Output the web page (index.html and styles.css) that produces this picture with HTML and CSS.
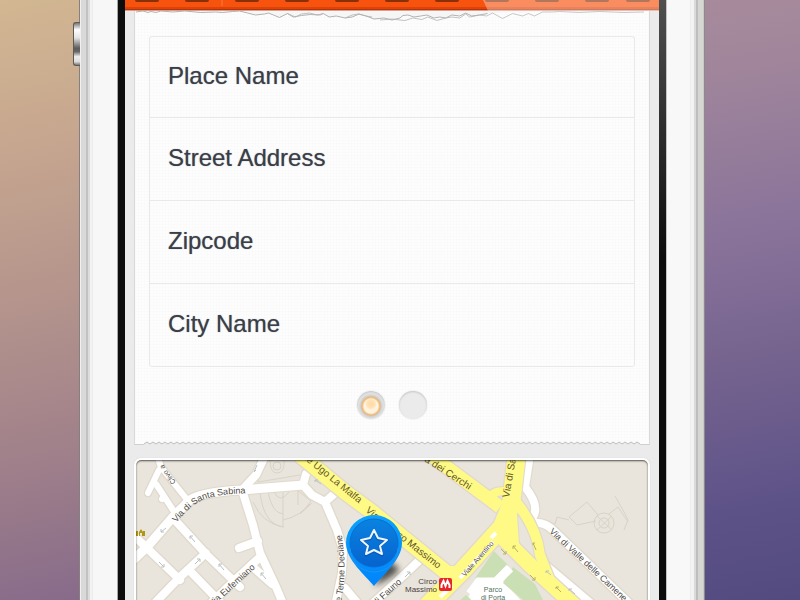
FILE: index.html
```html
<!DOCTYPE html>
<html lang="en">
<head>
<meta charset="utf-8">
<meta name="viewport" content="width=device-width, initial-scale=1">
<title>Place details</title>
<link rel="stylesheet" href="styles.css">
</head>
<body>
<div class="phone">
  <div class="volume-key"></div>
  <div class="bezel bezel-left"></div>
  <main class="screen">
    <header class="toolbar">
      <svg viewBox="0 0 534 11" preserveAspectRatio="none" aria-hidden="true">
        <rect width="534" height="11" fill="#f7530f"/>
        <rect y="7" width="534" height="2" fill="#dc4409"/>
        <rect y="9" width="534" height="1" fill="#b93208"/>
        <rect y="10" width="534" height="1" fill="#d9a08c"/>
        <path d="M97 0V6" stroke="#ff7a33"/>
        <path d="M12 0h20M62 0h20M112 0h20M162 0h20M212 0h20M262 0h20M312 0h20M362 0h20M412 0h20M462 0h20M503 0h20" stroke="#8a3009" stroke-width="4" stroke-linecap="round"/>
        <path d="M358 0H534V11H363Z" fill="#fff" opacity=".34"/>
      </svg>
    </header>
    <form class="card">
      <svg class="torn" viewBox="134 11 516 11" preserveAspectRatio="none" aria-hidden="true">
        <path d="M135 12L142 11L147 12.500L150 11.500L155 12.500L160 11L172 12L184 11L200 12.500L215 12L222 12.500L232 11.500L239 11L247 13L255 15L264 14L268 13L273 15L279 17.500L287 13.500L293 17L301 15.500L310 14.500L320 15L323 13.500L329 17L336 16L345 18L352 17L359 14L366 16L374 19L384 18L392 20L400 18L403 15.500L408 15L414 17L421 16L427 15L434 18L440 17L446 18L452 15L460 16L466 13L472 16L480 15L490 13L500 13L513 12L523 13L529 12L535 12L543 11.500L560 11L580 12L600 11.500L640 12V11H135Z" fill="#f6f6f6"/>
        <g fill="none" stroke="#b2b2b2" stroke-linejoin="round">
          <path d="M135 12L142 11L147 12.500L150 11.500L155 12.500L160 11L172 12L184 11L200 12.500L215 12L222 12.500L232 11.500L239 11L247 13L255 15L264 14L268 13L273 15L279 17.500L287 13.500L293 17L301 15.500L310 14.500L320 15L323 13.500L329 17L336 16L345 18L352 17L359 14L366 16L374 19L384 18L392 20L400 18L403 15.500L408 15L414 17L421 16L427 15L434 18L440 17L446 18L452 15L460 16L466 13L472 16L480 15L488 13.500"/>
          <path d="M287 13.500L295 17L301 14L309 13L317 15L323 13.500M345 18L352 15L358 14L366 16L372 17M380 20L392 19L400 20L405 20.500L413 18L422 19.500L428 17L437 20.500L446 18L452 17L460 18L466 14L470 17L480 15" opacity=".8"/>
          <path d="M480 15L487 16L493 13L503 18.500L513 13.500L523 16L529 13.500L535 16L543 12L553 12L560 11.500L580 12.500L600 11.500L625 12.500L645 12" opacity=".7"/>
        </g>
      </svg>
      <div class="fields">
        <label class="field"><span>Place Name</span><input type="text" name="place"></label>
        <label class="field"><span>Street Address</span><input type="text" name="street"></label>
        <label class="field"><span>Zipcode</span><input type="text" name="zip"></label>
        <label class="field"><span>City Name</span><input type="text" name="city"></label>
      </div>
      <nav class="pager" aria-label="Pages">
        <button type="button" class="dot dot-on" aria-label="Page 1"></button>
        <button type="button" class="dot" aria-label="Page 2"></button>
      </nav>
      <svg class="teeth" viewBox="0 0 516 5" preserveAspectRatio="none" aria-hidden="true">
        <defs>
          <pattern id="tooth" width="6" height="5" patternUnits="userSpaceOnUse">
            <rect width="6" height="5" fill="#ebebeb"/>
            <path d="M0 0H6V2L3 4L0 2Z" fill="#fbfbfb"/>
            <path d="M0 2L3 4L6 2" fill="none" stroke="#bdbdbd"/>
          </pattern>
        </defs>
        <rect width="516" height="5" fill="url(#tooth)"/>
        <path d="M0 0H9V4H0ZM507 0H516V4H507Z" fill="#fcfcfc"/>
        <path d="M0 4.500H9M507 4.500H516" stroke="#cfcfcf"/>
      </svg>
    </form>
    <section class="map" aria-label="Map">
      <svg viewBox="136 460 512 140" preserveAspectRatio="xMidYMin slice">
        <defs>
          <linearGradient id="pinOuter" x1="0" y1="0" x2="0" y2="1">
            <stop offset="0" stop-color="#0aa2fb"/><stop offset="1" stop-color="#0084fb"/>
          </linearGradient>
          <linearGradient id="pinInner" x1="0" y1="0" x2="0" y2="1">
            <stop offset="0" stop-color="#0a83e0"/><stop offset="1" stop-color="#0663cf"/>
          </linearGradient>
          <filter id="soft" x="-50%" y="-50%" width="200%" height="200%"><feGaussianBlur stdDeviation="3"/></filter>
          <filter id="edge" x="-10%" y="-10%" width="120%" height="120%">
            <feMorphology in="SourceAlpha" operator="dilate" radius="1" result="grown"/>
            <feFlood flood-color="#e0d9cc"/>
            <feComposite in2="grown" operator="in" result="line"/>
            <feMerge><feMergeNode in="line"/><feMergeNode in="SourceGraphic"/></feMerge>
          </filter>
          <path id="sabina" d="M176 523C189 508 197 500 213 497C222 494 230 494 252 493"/>
          <path id="deciane" d="M340 606Q349 570 340 526"/>
          <path id="clivo" d="M176 482L165 468L160 448"/>
        </defs>
        <rect x="0" y="400" width="800" height="600" fill="#e9e5dc"/>
        <g fill="none" stroke="#d8d3c8">
          <path d="M260 493Q264 525 284 527M268 492Q272 513 283 514M274 492Q280 504 289 492M253 502Q262 523 283 527V492M297 490L311 501Q302 516 283 520M260 460L258 482L300 475M270 460Q270 473 277 473Q285 473 284 460M298 490V505M300 514L310 504M256 478L260 470"/>
          <circle cx="277" cy="466" r="4"/>
          <circle cx="604" cy="523" r="10"/><circle cx="604" cy="523" r="5"/>
          <path d="M597 516L612 530M612 516L597 530M598 515L587 502L569 517L577 525L596 521M569 520L557 517L555 524L545 522M609 514L618 507L628 522M615 496L624 512L628 520L624 530M540 545L551 565L560 580M300 514L312 503"/>
        </g>
        <path fill="#fff" d="M478 578H500L526 606H464Z"/>
        <path fill="#cbdfb5" d="M494 551L509 566L497 578H475ZM513 567L535 584L546 606H530L503 583ZM458 602L466 595L478 606Z"/>
        <path d="M470 594L479 582L496 582L510 568" fill="none" stroke="#fff" stroke-width="9"/>
        <g fill="none" stroke="#fff" stroke-linecap="round" stroke-linejoin="round" filter="url(#edge)">
          <path stroke-width="9" d="M130 563L147 547L173 517L190 500Q202 492 242 490L303 485"/>
          <path stroke-width="6" d="M158 458L161 467L189 502M159 470L148 493M156 484L173 510M162 499L163 497"/>
          <path stroke-width="8" d="M173 518L206 554L240 587M130 532L147 548L180 580M152 606L180 577L206 553M190 571L224 606"/>
          <path stroke-width="8" d="M208 606L235 580L260 557M264 458L256 475L242 490L253 525L260 553L276 587L284 606M258 541L239 548M254 568L272 584"/>
          <path stroke-width="8" d="M306 474L303 485L312 495L325 502L334 494M325 502L337 530L343 550L342 573L335 606M345 588L360 606"/>
          <path stroke-width="8" d="M425 555L405 574L370 606"/>
          <path stroke-width="8" d="M530 455L525 487Q541 507 532 518M533 523Q545 521 555 532L632 606M543 563L594 606"/>
        </g>
        <g fill="none" stroke="#fffa85" stroke-linejoin="round" filter="url(#edge)">
          <path stroke-width="15" d="M300 455L345 492L372 512L400 535L447 573"/>
          <path stroke-width="13" d="M425 451L500 507"/>
          <path stroke-width="18" d="M517 452L511 505L502 527L463 570L427 606"/>
          <path stroke-width="15" d="M500 535L530 565L575 606"/>
          <path stroke-width="10" d="M512 515L514 545L530 567M516 502Q537 528 540 555L553 588"/>
          <path stroke-width="8" d="M488 500Q492 491 504 491M440 570L456 570"/>
        </g>
        <path d="M491 538L496 533M460 578L493 542M440 597L452 586" stroke="#fff" stroke-width="4"/>
        <g stroke="#b9c0c2" fill="none">
          <path d="M161 532l5-4m-5 1v3h3M190 536l5 6m-5-3v-3h3M219 564l5 6m-5-3v-3h3M159 562l5 5m0-3v3h-3M195 564l5-5m-3 0h3v3M261 573l5 6m-5-3v-3h3M254 472l3-7m-3 7l2-2M405 577l5-5m-3 0h3v3M315 480l6 4m-6-2v-2h3M546 571l5 4m-5-2v-2h3M569 589l6 5m-6-3v-2h3"/>
          <path stroke="#b8b05c" d="M501 549l5 5m0-3v3h-3M513 546l5 6m-5-3v-3h3M533 543l3 7m-3-5v-2h2M530 575l5 5m0-3v3h-3M556 587l5 5m-5-3v-2h3"/>
        </g>
        <g class="street">
          <text><textPath href="#sabina">Via di Santa Sabina</textPath></text>
          <text><textPath href="#deciane">lle Terme Deciane</textPath></text>
          <text class="tiny"><textPath href="#clivo">Clivo a</textPath></text>
          <text transform="translate(212 607) rotate(-42)">Via Eufemiano</text>
          <text transform="translate(376 606) rotate(-42)">di Fauno</text>
          <text transform="translate(549 532) rotate(43)">Via di Valle delle Camene</text>
          <text class="tiny" transform="translate(465 577) rotate(-49)">Viale Aventino</text>
          <text class="wide" transform="translate(300 456) rotate(39)">ale Ugo La Malfa</text>
          <text class="wide" transform="translate(365 511) rotate(42)">Via</text>
          <text class="wide end" transform="translate(438 569) rotate(38)">Circo Massimo</text>
          <text class="wide" transform="translate(424 461) rotate(33)">a dei Cerchi</text>
          <text class="wide" transform="translate(509 498) rotate(-80)">Via di Sa</text>
        </g>
        <g class="place">
          <text class="end" x="437" y="584">Circo</text>
          <text class="end" x="437" y="592">Massimo</text>
          <text class="park" x="493" y="592">Parco</text>
          <text class="park" x="493" y="600">di Porta</text>
        </g>
        <rect x="439" y="578" width="13" height="13" rx="2" fill="#e8262a"/>
        <path d="M441.500 588V585L443.500 581L445.500 586L447.500 581L449.500 585V588" fill="none" stroke="#fff" stroke-width="2"/>
        <path d="M136 531h2v5h-2zM139 536v-4l2-3 2 3v4h-1v-3h-2v3zM143 531h2v5h-2z" fill="#b3960f"/>
        <path d="M374 586L384 563Q392 560 399 569Q396 576 374 586Z" fill="#000" opacity=".65" filter="url(#soft)"/>
        <path d="M374 586C366 576 346 560 346 543A28 28 0 1 1 402 543C402 560 382 576 374 586Z" fill="url(#pinOuter)"/>
        <circle cx="374" cy="543" r="24" fill="url(#pinInner)" stroke="#0a6cd0"/>
        <path d="M350 548A24 24 0 0 0 398 548" fill="none" stroke="#1f93f0"/>
        <path d="M374 531L378 539L387 540L380 546L382 555L374 551L366 555L368 546L361 540L370 539Z" fill="none" stroke="#094fa8" stroke-width="3" stroke-linejoin="round" opacity=".6"/>
        <path d="M374 530L378 538L387 540L380 546L382 554L374 550L366 554L368 546L361 540L370 538Z" fill="none" stroke="#eef6ff" stroke-width="2" stroke-linejoin="round"/>
      </svg>
    </section>
  </main>
  <div class="bezel bezel-right"></div>
</div>
</body>
</html>
```
FILE: styles.css
```css
* {
  box-sizing: border-box;
}

body {
  margin: 0;
  min-height: 100vh;
  font-family: "Liberation Sans", Arial, sans-serif;
  color: #3a3e48;
  background:
    linear-gradient(168deg, #d2b792 0%, #c6a68f 22%, #b4948c 45%, #a0808a 68%, #85698a 92%, #7c6385 100%) left / 50% 100% no-repeat,
    linear-gradient(170deg, #ab8e9c 0%, #a1869b 18%, #88729a 45%, #76648f 62%, #5d5288 85%, #534b80 100%) right / 50% 100% no-repeat;
}

.phone {
  position: relative;
  display: flex;
  min-height: 100vh;
  margin: 0 95px 0 79px;
}

.volume-key {
  position: absolute;
  top: 22px;
  left: -6px;
  width: 7px;
  height: 44px;
  border: 1px solid #5f5a56;
  border-right: 0;
  border-radius: 3px 0 0 3px;
  background: linear-gradient(#777 0%, #fff 16%, #e4e4e4 35%, #5c5c5c 60%, #666 68%, #eee 80%, #ddd 92%, #777 100%);
}

.bezel-left {
  flex: 0 0 46px;
  background: linear-gradient(90deg,
    #85807d 0 1px, #efefef 1px 2px, #d9d9d9 2px 7px, #c2c2c2 7px 9px, #dcdcdc 9px 11px,
    #f3f3f3 11px 13px, #ebebeb 13px 14px, #f7f7f7 14px 38px, #a5a8a8 38px 39px, #0d0d0d 39px 46px);
}

.bezel-right {
  flex: 0 0 46px;
  background:
    linear-gradient(rgba(255, 255, 255, .28), rgba(255, 255, 255, 0) 260px) left / 7px 100% no-repeat,
    linear-gradient(90deg,
      #0c0c0c 0 7px, #c4c4c4 7px 8px, #f8f8f8 8px 31px, #ededed 31px 32px, #f3f3f3 32px 35px,
      #dadada 35px 37px, #bdbdbd 37px 39px, #d6d6d3 39px 44px, #c8c8c4 44px 45px, #8c8a8c 45px 46px);
}

.screen {
  flex: 1;
  min-width: 0;
  display: flex;
  flex-direction: column;
  background: #ebebeb;
}

.toolbar svg,
.torn,
.teeth {
  display: block;
  width: 100%;
}

.toolbar svg {
  height: 11px;
}

.card {
  display: flex;
  flex-direction: column;
  margin: 0 9px;
  border: solid #d9d9d9;
  border-width: 0 1px;
  background:
    repeating-linear-gradient(90deg, rgba(0, 0, 0, .008) 0 1px, transparent 1px 3px),
    repeating-linear-gradient(rgba(0, 0, 0, .008) 0 1px, transparent 1px 3px),
    #fdfdfd;
}

.torn {
  height: 11px;
}

.fields {
  margin: 14px 14px 0;
  border: 1px solid #e9e9e9;
  border-bottom: 0;
  border-radius: 3px;
}

.field {
  display: flex;
  align-items: center;
  gap: 16px;
  height: 83px;
  padding: 0 18px 2px;
  border-bottom: 1px solid #e9e9e9;
  font-size: 24px;
  line-height: 28px;
  text-shadow: 0 0 1px rgba(58, 62, 72, .6);
}

.field:first-child {
  height: 81px;
}

.field:last-child {
  border-radius: 0 0 3px 3px;
}

.field input {
  flex: 1;
  min-width: 0;
  padding: 0;
  border: 0;
  outline: 0;
  background: none;
  font: inherit;
  color: inherit;
}

.pager {
  display: flex;
  justify-content: center;
  gap: 14px;
  margin: 24px 0 21px;
}

.dot {
  width: 28px;
  height: 28px;
  padding: 0;
  border: 0;
  border-radius: 50%;
  background: #ebebeb;
  box-shadow: inset 0 1px 2px rgba(0, 0, 0, .16), 0 0 1px 1px rgba(0, 0, 0, .04);
}

.dot-on {
  background:
    radial-gradient(circle at 50% 46%, #ffd9a3 0, #ffe2b8 4px, rgba(255, 240, 218, 0) 6px),
    radial-gradient(circle at 50% 54%, #fff3e0 0, #fff3e0 7px, #fbd093 8px, #e9b778 9px, #cfcac4 10px, #e0e0e0 12px, #e6e6e6 14px);
}

.teeth {
  height: 5px;
}

.map {
  flex: 1;
  display: flex;
  margin: 13px 9px 0;
  border: 2px solid #fff;
  border-bottom: 0;
  border-radius: 7px 7px 0 0;
  overflow: hidden;
  position: relative;
  box-shadow: 0 0 1px #bbb;
}

.map::after {
  content: "";
  position: absolute;
  inset: 0 0 -4px;
  border-radius: 5px 5px 0 0;
  box-shadow: inset 0 1px 2px rgba(0, 0, 0, .65);
  pointer-events: none;
}

.map svg {
  display: block;
  width: 100%;
  min-height: 100%;
}

.street {
  font-size: 9px;
  fill: #4f4a44;
}

.street .tiny {
  font-size: 7px;
}

.street .wide {
  font-size: 10px;
  fill: #5f5526;
}

.place {
  font-size: 8px;
  fill: #4a4040;
}

.end {
  text-anchor: end;
}

.park {
  text-anchor: middle;
  font-size: 7px;
  fill: #50705a;
}
```
